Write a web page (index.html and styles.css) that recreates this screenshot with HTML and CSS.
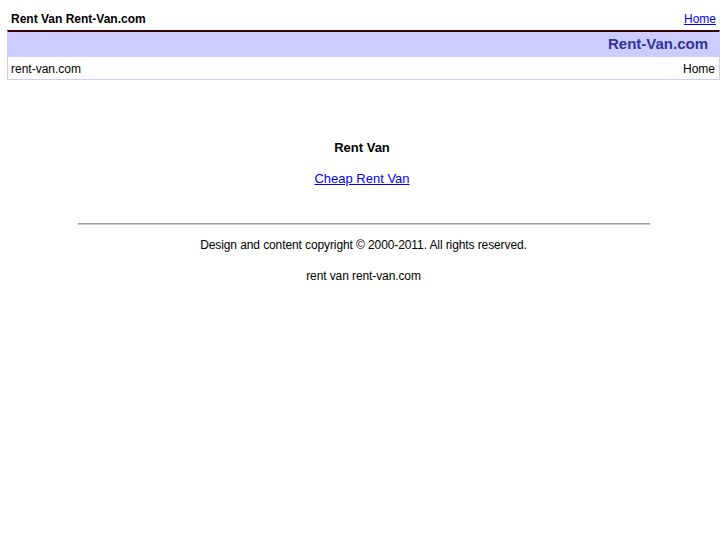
FILE: index.html
```html
<!DOCTYPE html>
<html lang="en">
<head>
    <meta charset="UTF-8">
    <title>Rent Van Rent-Van.com</title>
    <link rel="stylesheet" href="styles.css">
</head>
<body>
    <div class="topbar">
        <h1 class="site-title">Rent Van Rent-Van.com</h1>
        <a href="#" class="top-link">Home</a>
    </div>

    <div class="banner">
        <div class="banner-title">Rent-Van.com</div>
        <div class="crumbs">
            <span>rent-van.com</span>
            <span>Home</span>
        </div>
    </div>

    <div class="content">
        <h2>Rent Van</h2>
        <p><a href="#">Cheap Rent Van</a></p>
    </div>

    <div class="footer">
        <hr>
        <p>Design and content copyright &copy; 2000-2011. All rights reserved.</p>
        <p>rent van rent-van.com</p>
    </div>
</body>
</html>
```

FILE: styles.css
```css
body {
    margin: 0;
    padding: 0 7px;
    background: #fff;
    color: #000;
    font-family: "Liberation Sans", Arial, sans-serif;
    font-size: 12px;
}

a {
    color: #00f;
}

.topbar {
    display: flex;
    justify-content: space-between;
    align-items: flex-end;
    height: 30px;
    box-sizing: border-box;
    padding: 0 4px 4px 4px;
}

.site-title {
    margin: 0;
    font-size: 12px;
    font-weight: bold;
}

.top-link {
    font-size: 12px;
}

.banner {
    border-top: 2px solid #330000;
    border-left: 1px solid #ccccff;
    border-right: 1px solid #ccccff;
    border-bottom: 1px solid #ccccff;
}

.banner-title {
    background: #ccccff;
    color: #333399;
    font-size: 15px;
    font-weight: bold;
    text-align: right;
    height: 25px;
    line-height: 24px;
    padding-right: 11px;
}

.crumbs {
    display: flex;
    justify-content: space-between;
    height: 22px;
    line-height: 24px;
    padding: 0 4px 0 3px;
}

.content {
    text-align: center;
    padding-top: 60px;
    padding-right: 3px;
}

.content h2 {
    margin: 0;
    font-size: 13px;
    font-weight: bold;
}

.content p {
    margin: 16px 0 0;
    font-size: 13px;
}

.footer {
    text-align: center;
    padding-top: 37px;
}

.footer hr {
    width: 572px;
    margin: 0 auto;
    border: 0;
    border-top: 1px solid #a0a0a0;
    border-bottom: 1px solid #c8c8c8;
}

.footer p {
    margin: 13px 0 0;
    letter-spacing: -0.1px;
}

.footer p + p {
    margin-top: 17px;
}
```
